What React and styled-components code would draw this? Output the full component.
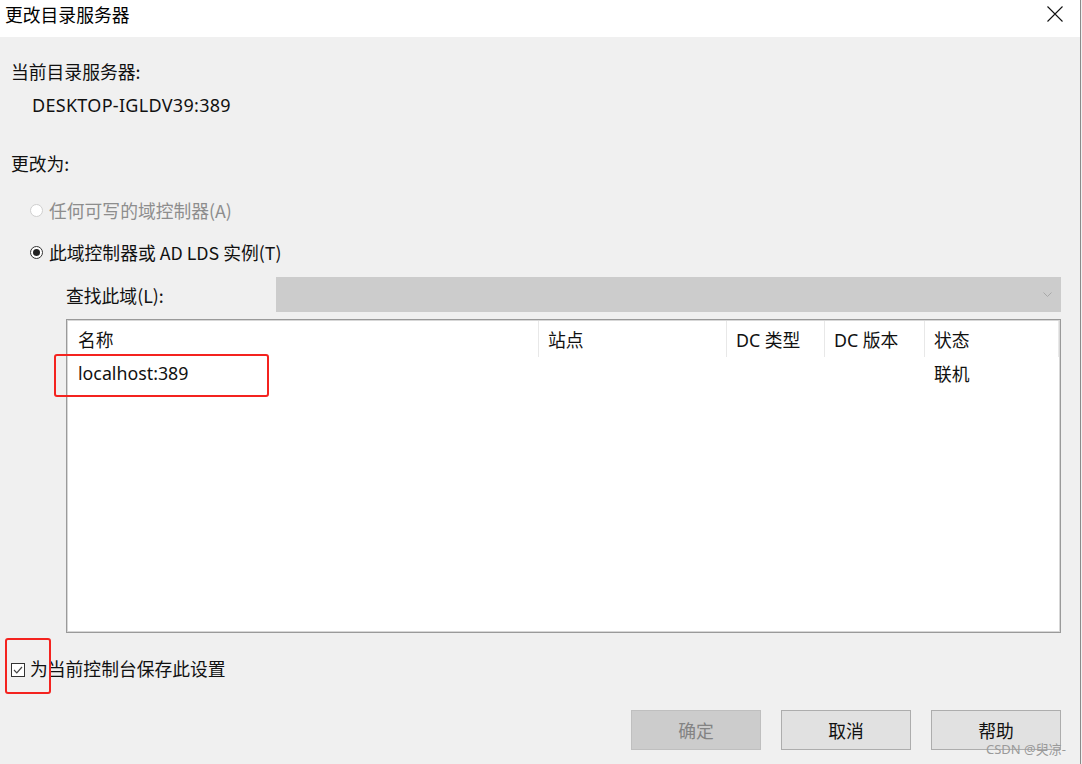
import React from 'react'
import styled, { createGlobalStyle } from 'styled-components'

const GlobalStyle = createGlobalStyle`
	html, body {
		margin: 0;
		padding: 0;
		background: #f0f0f0;
	}
	body {
		font-family: "Noto Sans", "Noto Sans CJK SC", sans-serif;
		color: #111;
	}
`

const Window = styled.div`
	position: relative;
	width: 1081px;
	height: 764px;
	box-sizing: border-box;
	border-right: 1px solid #8a8a8a;
	background: #f0f0f0;
	display: flex;
	flex-direction: column;
	overflow: hidden;
`

const TitleBar = styled.div`
	height: 37px;
	flex: none;
	background: #fff;
	display: flex;
	align-items: center;
	justify-content: space-between;
	padding: 0 16px 10px 5px;
	box-sizing: border-box;
	font-family: "Noto Sans CJK SC", sans-serif;
	font-size: 17.8px;
	color: #000;
`

const CloseButton = styled.div`
	width: 18px;
	height: 18px;
	display: flex;
	svg {
		display: block;
	}
`

const Body = styled.div`
	flex: 1;
	display: flex;
	flex-direction: column;
	padding: 0 19px 0 11px;
`

const Line = styled.div`
	height: 24px;
	line-height: 24px;
	font-size: 17.8px;
	font-family: "Noto Sans CJK SC", sans-serif;
	margin-top: ${p => p.$top || 0}px;
	padding-left: ${p => p.$indent || 0}px;
	color: ${p => (p.$disabled ? '#8d8d8d' : '#111')};
	display: flex;
	align-items: center;
	white-space: nowrap;
`

const Latin = styled.span`
	font-family: "Noto Sans", sans-serif;
	font-size: 18px;
	letter-spacing: 0.3px;
`

const Radio = styled.span`
	width: 13px;
	height: 13px;
	box-sizing: border-box;
	border-radius: 50%;
	border: 1px solid ${p => (p.$disabled ? '#cfcfcf' : '#333')};
	background: #fff;
	margin-right: 6px;
	display: flex;
	align-items: center;
	justify-content: center;
	flex: none;
	&::after {
		content: '';
		width: 7px;
		height: 7px;
		border-radius: 50%;
		background: #222;
		display: ${p => (p.$checked ? 'block' : 'none')};
	}
`

const FindRow = styled.div`
	margin-top: 13px;
	padding-left: 55px;
	display: flex;
	align-items: center;
	height: 35px;
`

const FindLabel = styled.div`
	width: 210px;
	font-size: 17.8px;
	font-family: "Noto Sans CJK SC", sans-serif;
	flex: none;
`

const Combo = styled.div`
	flex: 1;
	height: 35px;
	background: #cccccc;
	display: flex;
	align-items: center;
	justify-content: flex-end;
	padding-right: 9px;
`

const ListBox = styled.div`
	margin: 7px 0 0 55px;
	height: 314px;
	box-sizing: border-box;
	border: 1px solid #9a9a9a;
	box-shadow: inset 0 0 0 1px #d7d7d7;
	background: #fff;
	padding: 1px;
	display: flex;
	flex-direction: column;
`

const Row = styled.div`
	display: grid;
	grid-template-columns: 471px 188px 98px 100px 134px;
	height: ${p => p.$h}px;
`

const Cell = styled.div`
	padding-left: ${p => (p.$first ? 10 : 9)}px;
	font-size: 17.8px;
	font-family: "Noto Sans", "Noto Sans CJK SC", sans-serif;
	display: flex;
	align-items: center;
	border-right: ${p => (p.$head ? '1px solid #e8e8e8' : 'none')};
	color: #111;
	white-space: nowrap;
`

const Highlight = styled.div`
	position: absolute;
	border: 2px solid #f4231f;
	border-radius: 3px;
	box-sizing: border-box;
	left: ${p => p.$x}px;
	top: ${p => p.$y}px;
	width: ${p => p.$w}px;
	height: ${p => p.$h}px;
	pointer-events: none;
`

const CheckRow = styled.div`
	margin-top: 23px;
	height: 24px;
	display: flex;
	align-items: center;
	font-size: 17.8px;
	font-family: "Noto Sans CJK SC", sans-serif;
`

const CheckBox = styled.span`
	width: 14px;
	height: 14px;
	box-sizing: border-box;
	border: 1px solid #333;
	background: #fff;
	margin-right: 5px;
	display: flex;
	align-items: center;
	justify-content: center;
	margin-top: 3px;
`

const ButtonBar = styled.div`
	margin-top: 30px;
	display: flex;
	justify-content: flex-end;
	gap: 20px;
`

const Button = styled.div`
	width: 130px;
	height: 40px;
	box-sizing: border-box;
	border: 1px solid ${p => (p.$disabled ? '#bfbfbf' : '#adadad')};
	background: ${p => (p.$disabled ? '#cccccc' : '#e1e1e1')};
	color: ${p => (p.$disabled ? '#838383' : '#111')};
	display: flex;
	align-items: center;
	justify-content: center;
	font-size: 17.8px;
	font-family: "Noto Sans CJK SC", sans-serif;
`

const Watermark = styled.div`
	position: absolute;
	right: 14px;
	bottom: 6px;
	font-size: 13px;
	color: #9a9a9a;
	font-family: "Noto Sans", "Noto Sans CJK SC", sans-serif;
`

const columns = ['名称', '站点', 'DC 类型', 'DC 版本', '状态']
const rows = [['localhost:389', '', '', '', '联机']]

export default function App() {
	return (
		<Window>
			<GlobalStyle />
			<TitleBar>
				<span>更改目录服务器</span>
				<CloseButton>
					<svg width="18" height="18" viewBox="0 0 18 18">
						<path d="M1.5 1.5 L16.5 16.5 M16.5 1.5 L1.5 16.5" stroke="#111" strokeWidth="1.1" />
					</svg>
				</CloseButton>
			</TitleBar>
			<Body>
				<Line $top={22}>当前目录服务器:</Line>
				<Line $top={10} $indent={21}>
					<Latin>DESKTOP-IGLDV39:389</Latin>
				</Line>
				<Line $top={34}>更改为:</Line>
				<Line $top={23} $indent={19} $disabled>
					<Radio $disabled />
					任何可写的域控制器(A)
				</Line>
				<Line $top={18} $indent={19}>
					<Radio $checked />
					此域控制器或 AD LDS 实例(T)
				</Line>
				<FindRow>
					<FindLabel>查找此域(L):</FindLabel>
					<Combo>
						<svg width="9" height="6" viewBox="0 0 9 6">
							<path d="M0.5 0.5 L4.5 4.5 L8.5 0.5" fill="none" stroke="#a8a8a8" strokeWidth="1" />
						</svg>
					</Combo>
				</FindRow>
				<ListBox>
					<Row $h={36}>
						{columns.map((c, i) => (
							<Cell key={c} $head $first={i === 0}>{c}</Cell>
						))}
					</Row>
					{rows.map((r, ri) => (
						<Row key={ri} $h={32}>
							{r.map((v, i) => (
								<Cell key={i} $first={i === 0}>{v}</Cell>
							))}
						</Row>
					))}
				</ListBox>
				<CheckRow>
					<CheckBox>
						<svg width="10" height="8" viewBox="0 0 10 8">
							<path d="M1 4 L3.8 6.8 L9 1" fill="none" stroke="#444" strokeWidth="1.2" />
						</svg>
					</CheckBox>
					为当前控制台保存此设置
				</CheckRow>
				<ButtonBar>
					<Button $disabled>确定</Button>
					<Button>取消</Button>
					<Button>帮助</Button>
				</ButtonBar>
			</Body>
			<Highlight $x={54} $y={354} $w={215} $h={43} />
			<Highlight $x={5} $y={638} $w={46} $h={56} />
			<Watermark>CSDN @臾凉-</Watermark>
		</Window>
	)
}
